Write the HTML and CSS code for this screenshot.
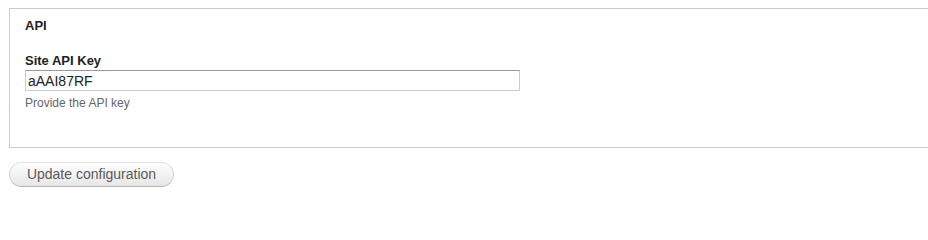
FILE: index.html
```html
<!DOCTYPE html>
<html>
<head>
<meta charset="utf-8">
<link rel="stylesheet" href="styles.css">
</head>
<body>
<form class="config-form">
  <div class="fieldset">
    <div class="legend">API</div>
    <div class="form-item">
      <label class="label" for="key">Site API Key</label>
      <input class="text-input" id="key" type="text" value="aAAI87RF">
      <div class="description">Provide the API key</div>
    </div>
  </div>
  <div class="actions">
    <button class="button" type="button">Update configuration</button>
  </div>
</form>
</body>
</html>
```
FILE: styles.css
```css
html, body {
  margin: 0;
  padding: 0;
  background: #fff;
}
body {
  font-family: "Liberation Sans", Arial, sans-serif;
  color: #333;
  overflow: hidden;
}
.config-form {
  padding: 8px 0 0 9px;
}
.fieldset {
  width: 903px;
  height: 138px;
  border: 1px solid #ccc;
  border-right: none;
  padding: 0 0 0 15px;
  box-sizing: content-box;
}
.legend {
  font-size: 13px;
  font-weight: bold;
  color: #222;
  margin-top: 9px;
  line-height: 16px;
}
.form-item {
  margin-top: 19px;
  display: flex;
  flex-direction: column;
  align-items: flex-start;
}
.label {
  font-size: 13px;
  font-weight: bold;
  color: #222;
  line-height: 16px;
  margin-bottom: 1px;
}
.text-input {
  box-sizing: border-box;
  width: 495px;
  height: 21px;
  margin: 0;
  padding: 0 2px;
  font-family: "Liberation Sans", Arial, sans-serif;
  font-size: 14px;
  color: #222;
  border: 1px solid #ccc;
  border-top-color: #999;
  border-radius: 0;
  outline: none;
  background: #fff;
}
.description {
  font-size: 12px;
  color: #666;
  margin-top: 5px;
  line-height: 15px;
}
.actions {
  margin-top: 14px;
}
.button {
  box-sizing: border-box;
  height: 25px;
  width: 165px;
  padding: 0 0 1px;
  font-family: "Liberation Sans", Arial, sans-serif;
  font-size: 14px;
  color: #5a5a5a;
  border: 1px solid #e4e4e4;
  border-left-color: #d2d2d2;
  border-right-color: #d2d2d2;
  border-bottom-color: #b4b4b4;
  border-radius: 13px;
  background: linear-gradient(#fefefe, #f0f0f0 60%, #e6e6e6);
  cursor: pointer;
}
```
